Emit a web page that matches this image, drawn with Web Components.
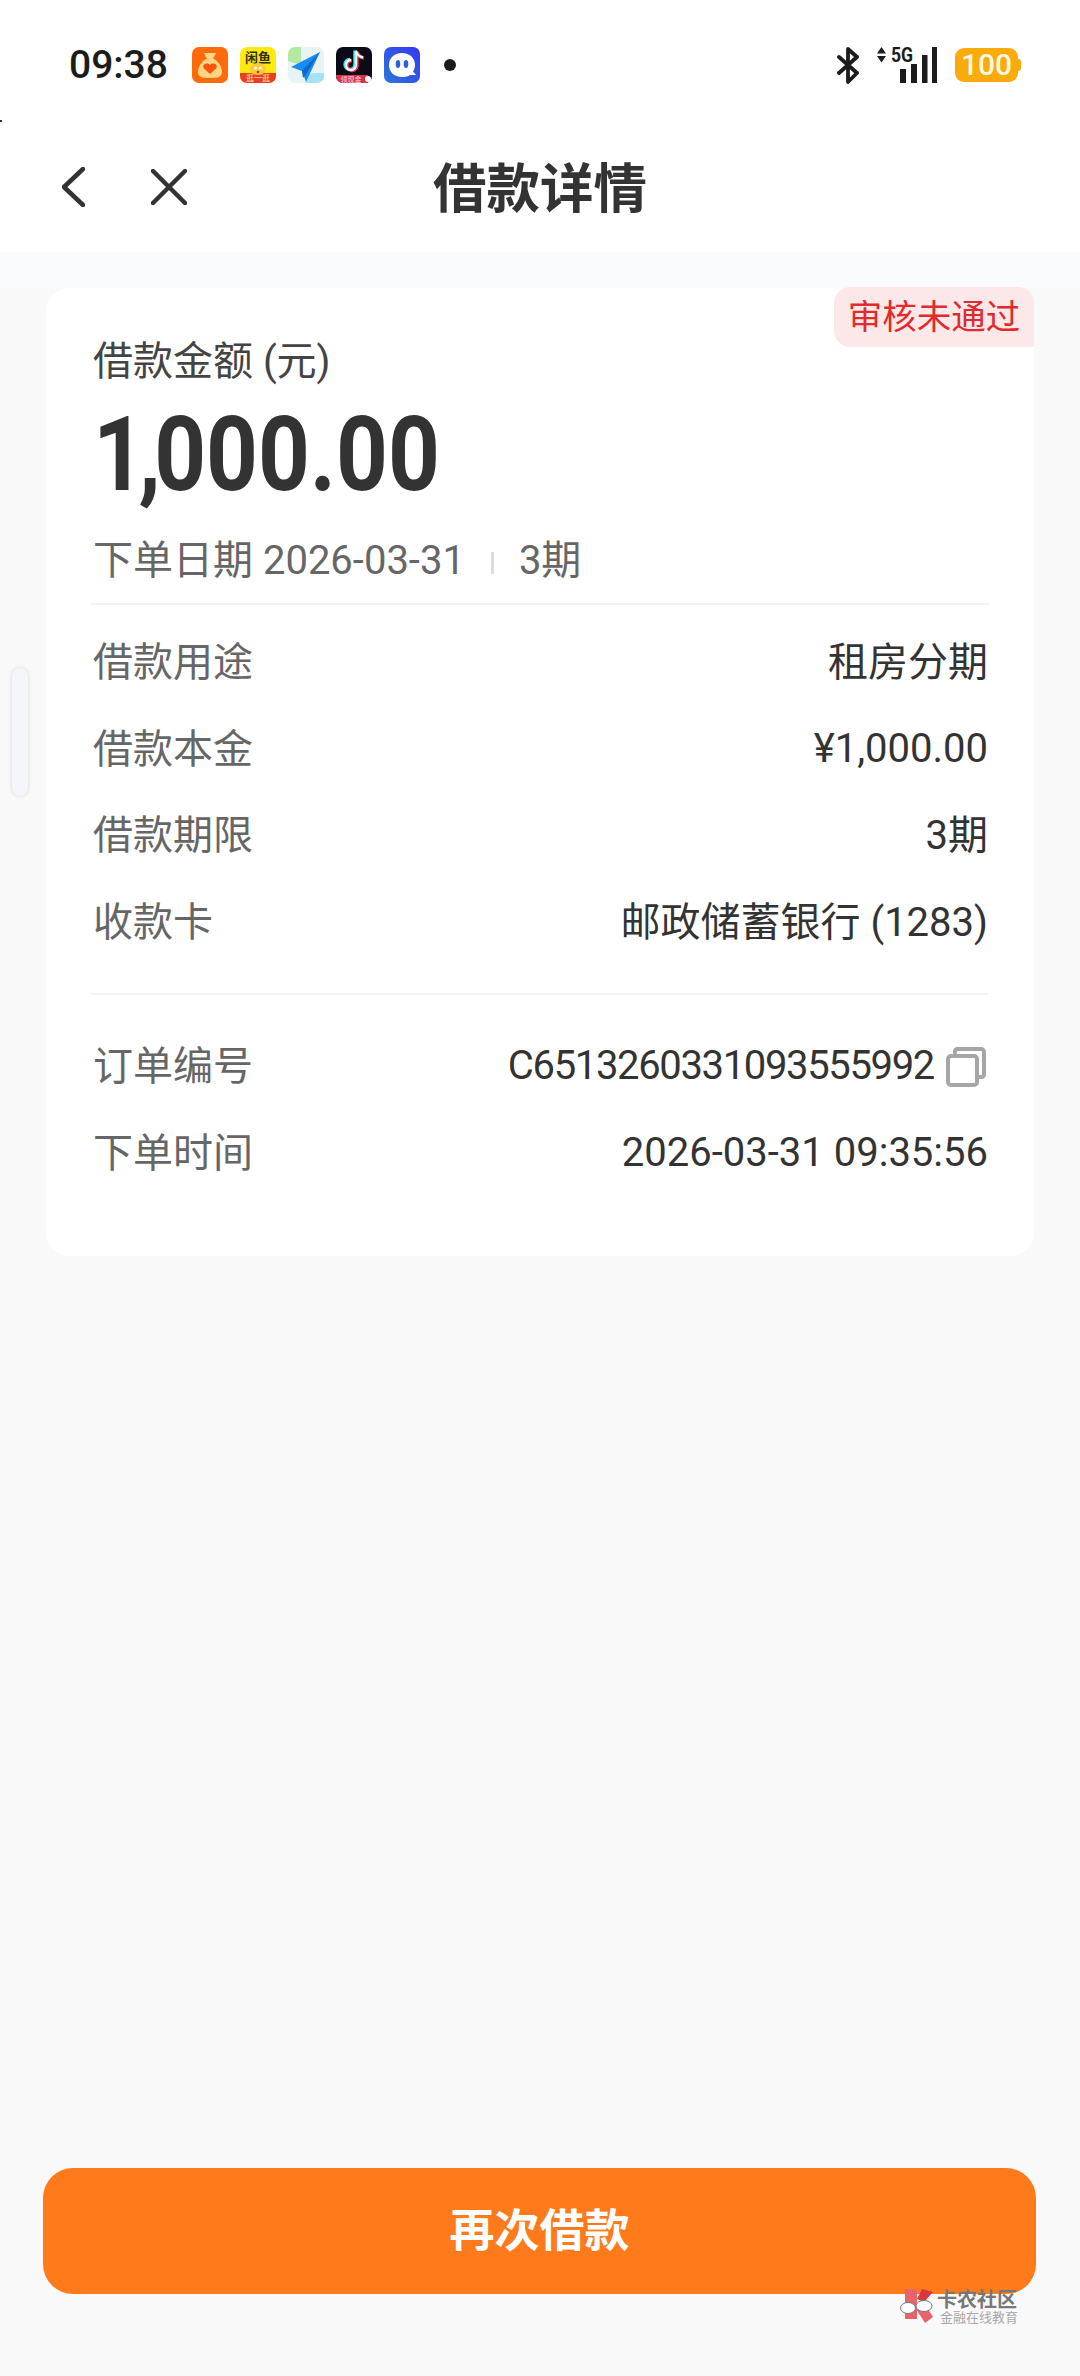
<!DOCTYPE html>
<html lang="zh-CN">
<head>
<meta charset="UTF-8">
<title>借款详情</title>
<style>
  html, body { margin: 0; padding: 0; }
  body { font-family: Roboto, "Noto Sans CJK SC", sans-serif; background: #f9f9f9; }
</style>
</head>
<body>
<loan-page>
  <status-bar slot="status"></status-bar>
  <nav-bar slot="nav" title="借款详情"></nav-bar>
  <loan-card slot="card" status="审核未通过">
    <detail-row label="借款用途" value="租房分期"></detail-row>
    <detail-row label="借款本金" value="¥1,000.00"></detail-row>
    <detail-row label="借款期限" value="3期"></detail-row>
    <detail-row label="收款卡" value="邮政储蓄银行 (1283)"></detail-row>
    <hr-line></hr-line>
    <detail-row label="订单编号" value="C6513260331093555992" copy></detail-row>
    <detail-row label="下单时间" value="2026-03-31 09:35:56"></detail-row>
  </loan-card>
  <action-button slot="action">再次借款</action-button>
</loan-page>

<script>
  const ROOT_FONT = 'Roboto, "Noto Sans CJK SC", sans-serif';

  // Page shell: white header, tinted band, card, pinned button
  class LoanPage extends HTMLElement {
    constructor() {
      super();
      this.attachShadow({ mode: 'open' });
      this.shadowRoot.innerHTML = `
        <style>
          :host { display: flex; flex-direction: column; position: relative; width: 1080px; height: 2376px; overflow: hidden; background: #f9f9f9; font-family: ${ROOT_FONT}; }
          .band { height: 36px; background: #f9fafc; flex: none; }
          .grow { flex: 1; }
          .tick { position: absolute; left: 0; top: 120px; width: 2px; height: 2px; background: #333; }
          .handle { position: absolute; left: 12px; top: 668px; width: 16px; height: 128px; box-sizing: border-box; border-radius: 8px; background: #f5f6fb; box-shadow: 0 0 3px 1px #e2e2e4; }
          .mark { position: absolute; left: 900px; top: 2289px; }
        </style>
        <slot name="status"></slot>
        <slot name="nav"></slot>
        <div class="band"></div>
        <slot name="card"></slot>
        <div class="grow"></div>
        <slot name="action"></slot>
        <div class="tick"></div>
        <div class="handle"></div>
        <water-mark class="mark"></water-mark>
      `;
    }
  }

  class StatusBar extends HTMLElement {
    constructor() {
      super();
      this.attachShadow({ mode: 'open' });
      this.shadowRoot.innerHTML = `
        <style>
          :host { display: flex; align-items: center; box-sizing: border-box; height: 122px; padding: 8px 0 0 69px; background: #fff; color: #1c1c1c; font-family: ${ROOT_FONT}; }
          .time { font-size: 39px; font-weight: 500; line-height: 40px; width: 123px; }
          .apps { display: flex; gap: 12px; }
          .apps svg { display: block; width: 36px; height: 36px; }
          .dot { width: 12px; height: 12px; border-radius: 50%; background: #1c1c1c; margin-left: 24px; }
          .right { display: flex; align-items: center; margin-left: auto; margin-right: 62px; }
          .right svg { display: block; }
          .battery { position: relative; box-sizing: border-box; width: 63px; height: 34px; margin-left: 18px; border-radius: 9px; background: #f8ab0b; color: #fff8e0; font-size: 30px; font-weight: 500; line-height: 34px; text-align: center; }
          .battery::after { content: ""; position: absolute; right: -3px; top: 11px; width: 3px; height: 12px; border-radius: 0 3px 3px 0; background: #f8ab0b; }
          .net { position: relative; width: 60px; height: 36px; margin-left: 18px; }
          .net span { position: absolute; left: 14px; top: -2px; font-size: 20px; font-weight: 700; line-height: 20px; transform: scaleX(.88); transform-origin: left; }
          .net svg { position: absolute; left: 0; top: 0; }
        </style>
        <div class="time">09:38</div>
        <div class="apps">
          <svg viewBox="0 0 36 36">
            <rect width="36" height="36" rx="7" fill="#ff6a0a"/>
            <path d="M12 6 L24 6 L21 12 L15 12 Z" fill="#ffd583"/>
            <path d="M14 12 H22 C28 16 30 21 30 25 C30 30 26 31 18 31 C10 31 6 30 6 25 C6 21 8 16 14 12 Z" fill="#ffd583"/>
            <path d="M18 27 L11.5 21 C10 17 15 15 18 18 C21 15 26 17 24.500 21 Z" fill="#f5560c"/>
          </svg>
          <svg viewBox="0 0 36 36">
            <rect width="36" height="36" rx="7" fill="#ffe90f"/>
            <path d="M0 26 H36 V29 A7 7 0 0 1 29 36 H7 A7 7 0 0 1 0 29 Z" fill="#e8401c"/>
            <text x="18" y="15" text-anchor="middle" font-size="13" font-weight="700" fill="#33301a">闲鱼</text>
            <ellipse cx="18" cy="22" rx="8" ry="6" fill="#ffc933"/>
            <circle cx="15.500" cy="21" r="1.600" fill="#fff"/><circle cx="20.500" cy="21" r="1.600" fill="#fff"/>
            <circle cx="18" cy="25" r="1.300" fill="#a33"/>
            <text x="18" y="34" text-anchor="middle" font-size="8" fill="#ffe4c4">逛一逛</text>
          </svg>
          <svg viewBox="0 0 36 36">
            <rect width="36" height="36" rx="7" fill="#e8f3f4"/>
            <path d="M0 7 A7 7 0 0 1 7 0 H13 V18 L0 14 Z" fill="#b5e8a0"/>
            <path d="M26 26 H36 V29 A7 7 0 0 1 29 36 H18 V28 Z" fill="#a5e2f7"/>
            <path d="M32 5 L3 20 L14 24 L18 35 Z" fill="#1a8cf0"/>
            <path d="M32 5 L14 24 L15 31 L18 27 Z" fill="#0d66cc"/>
          </svg>
          <svg viewBox="0 0 36 36">
            <rect width="36" height="36" rx="7" fill="#0b0b18"/>
            <path d="M0 28 H32 V36 H7 A7 7 0 0 1 0 29 Z" fill="#d9314a"/>
            <circle cx="32" cy="32" r="3" fill="#fff"/>
            <path d="M20 4 V18 A5 5 0 1 1 15 13 M20 4 C21 8 24 10 27 10.500" fill="none" stroke="#25f4ee" stroke-width="3.400" transform="translate(-1 -.6)"/>
            <path d="M20 4 V18 A5 5 0 1 1 15 13 M20 4 C21 8 24 10 27 10.500" fill="none" stroke="#fe2c55" stroke-width="3.400" transform="translate(1 .6)"/>
            <path d="M20 4 V18 A5 5 0 1 1 15 13 M20 4 C21 8 24 10 27 10.500" fill="none" stroke="#fff" stroke-width="2.400"/>
            <text x="15" y="35" text-anchor="middle" font-size="7" fill="#fbdde1">领现金</text>
          </svg>
          <svg viewBox="0 0 36 36">
            <defs><linearGradient id="qg" x1="0" y1="1" x2="1" y2="0"><stop offset="0" stop-color="#2a78d8"/><stop offset="1" stop-color="#3a35f5"/></linearGradient></defs>
            <rect width="36" height="36" rx="7" fill="url(#qg)"/>
            <path d="M18 6 C26 6 31 11 31 18 C31 21 30 23 29 24.500 L32 28 L26 28 C24 29.500 21 30 18 30 C10 30 5 25 5 18 C5 11 10 6 18 6 Z" fill="#fff"/>
            <ellipse cx="14" cy="17" rx="2.300" ry="4" fill="#2f5fd8"/>
            <ellipse cx="22" cy="17" rx="2.300" ry="4" fill="#2f5fd8"/>
          </svg>
        </div>
        <div class="dot"></div>
        <div class="right">
          <svg width="22" height="37" viewBox="0 0 22 37"><path d="M2 10 L20 26 L11 35 V2 L20 10 L2 26" fill="none" stroke="#1c1c1c" stroke-width="3.800" stroke-linejoin="round" stroke-linecap="round"/></svg>
          <div class="net">
            <span>5G</span>
            <svg width="60" height="36" viewBox="0 0 60 36" fill="#1c1c1c">
              <path d="M0 6.500 L4.500 0 L9 6.500 Z M0 9 L9 9 L4.500 15.500 Z"/>
              <rect x="23" y="22" width="6" height="14"/>
              <rect x="34" y="17" width="6" height="19"/>
              <rect x="45" y="8" width="5.500" height="28"/>
              <rect x="55" y="0" width="5.500" height="36"/>
            </svg>
          </div>
          <div class="battery">100</div>
        </div>
      `;
    }
  }

  class NavBar extends HTMLElement {
    constructor() {
      super();
      this.attachShadow({ mode: 'open' });
      const title = this.getAttribute('title') || '';
      this.removeAttribute('title');
      this.shadowRoot.innerHTML = `
        <style>
          :host { display: grid; grid-template-columns: 1fr auto 1fr; align-items: center; height: 130px; background: #fff; color: #333; }
          .left { display: flex; align-items: center; gap: 66px; padding-left: 62px; }
          svg { display: block; }
          h1 { margin: 0; padding-top: 6px; font-size: 53.500px; font-weight: 700; line-height: 60px; font-family: ${ROOT_FONT}; }
        </style>
        <div class="left">
          <svg width="23" height="40" viewBox="0 0 23 40"><path d="M21 2 L2 20 L21 38" fill="none" stroke="#333" stroke-width="4.500" stroke-linecap="round" stroke-linejoin="round"/></svg>
          <svg width="36" height="36" viewBox="0 0 36 36"><path d="M2 2 L34 34 M34 2 L2 34" fill="none" stroke="#333" stroke-width="4.500" stroke-linecap="round"/></svg>
        </div>
        <h1>${title}</h1>
        <div></div>
      `;
    }
  }

  class LoanCard extends HTMLElement {
    constructor() {
      super();
      this.attachShadow({ mode: 'open' });
      const status = this.getAttribute('status') || '';
      this.shadowRoot.innerHTML = `
        <style>
          :host { display: block; position: relative; box-sizing: border-box; height: 968px; margin: 0 46px; padding: 49px 46px 61px 47px; background: #fff; border-radius: 24px; font-family: ${ROOT_FONT}; }
          .tag { position: absolute; right: 0; top: -1px; box-sizing: border-box; width: 200px; height: 60px; border-radius: 16px 16px 0 16px; background: #fde8e9; color: #e02a2d; font-size: 34.500px; line-height: 60px; text-align: center; white-space: nowrap; }
          .label { font-size: 40px; line-height: 50px; color: #444; }
          .amount { margin-top: 13px; font-size: 104px; font-weight: 700; line-height: 110px; color: #333; white-space: nowrap; transform: scaleX(.87); transform-origin: left; }
          .comma { letter-spacing: -7.500px; }
          .meta { display: flex; align-items: center; margin-top: 26px; font-size: 40px; line-height: 50px; color: #666; white-space: nowrap; }
          .sep { width: 3px; height: 22px; margin: 4px 25px 0 26px; background: #ddd; }
          .rule { height: 2px; margin: 17px -1px 15px -2px; background: #f2f2f2; }
        </style>
        <div class="tag">${status}</div>
        <div class="label">借款金额 (元)</div>
        <div class="amount"><span class="comma">1,</span>000.00</div>
        <div class="meta"><span>下单日期 2026-03-31</span><span class="sep"></span><span>3期</span></div>
        <div class="rule"></div>
        <slot></slot>
      `;
    }
  }

  class DetailRow extends HTMLElement {
    constructor() {
      super();
      this.attachShadow({ mode: 'open' });
      const label = this.getAttribute('label') || '';
      const value = this.getAttribute('value') || '';
      const copy = this.hasAttribute('copy');
      // CJK lines sit a little lower than plain digit lines, nudge them up
      const cjk = /[\u4e00-\u9fff]/.test(value);
      this.shadowRoot.innerHTML = `
        <style>
          :host { display: flex; align-items: center; justify-content: space-between; height: 86.500px; font-size: 40px; white-space: nowrap; }
          .label { color: #666; padding-bottom: 8px; }
          .value { display: flex; align-items: center; color: #333; }
          .text { padding-bottom: 3px; }
          .text.cjk { padding-bottom: 8px; }
          .text.tight { letter-spacing: -1.350px; }
          svg { display: block; margin: 0 2px 0 12px; }
        </style>
        <span class="label">${label}</span>
        <span class="value"><span class="text ${cjk ? 'cjk' : ''} ${copy ? 'tight' : ''}">${value}</span>${copy ? `
          <svg width="40" height="40" viewBox="0 0 40 40" fill="none" stroke="#a6a6a6" stroke-width="4" stroke-linejoin="round">
            <rect x="2" y="9" width="29" height="29" rx="3"/>
            <path d="M9 9 V4 A2.500 2.500 0 0 1 11.500 2 H35 A3 3 0 0 1 38 5 V28 A2.500 2.500 0 0 1 35 30 H31"/>
          </svg>` : ''}</span>
      `;
    }
  }

  class HrLine extends HTMLElement {
    constructor() {
      super();
      this.attachShadow({ mode: 'open' });
      this.shadowRoot.innerHTML = `
        <style>:host { display: block; height: 2px; margin: 27px 0 29px -2px; background: #f2f2f2; }</style>
      `;
    }
  }

  class ActionButton extends HTMLElement {
    constructor() {
      super();
      this.attachShadow({ mode: 'open' });
      this.shadowRoot.innerHTML = `
        <style>
          :host { display: flex; align-items: center; justify-content: center; box-sizing: border-box; height: 126px; margin: 0 44px 82px 43px; padding-bottom: 8px; border-radius: 30px; background: #ff7a1a; color: #fff; font-size: 45px; font-weight: 700; font-family: ${ROOT_FONT}; }
        </style>
        <slot></slot>
      `;
    }
  }

  class WaterMark extends HTMLElement {
    constructor() {
      super();
      this.attachShadow({ mode: 'open' });
      this.shadowRoot.innerHTML = `
        <style>
          :host { display: flex; gap: 4px; font-family: ${ROOT_FONT}; }
          svg { display: block; }
          .text { display: flex; flex-direction: column; padding-top: 1px; }
          .big { font-size: 20px; font-weight: 700; line-height: 20px; color: #777; white-space: nowrap; }
          .small { font-size: 13px; line-height: 14px; margin: 1px 0 0 3px; color: #a8a8a8; white-space: nowrap; }
        </style>
        <svg width="33" height="34" viewBox="0 0 33 34">
          <path d="M5 0 H17 V30 H5 Z" fill="#e8646a"/>
          <path d="M17 10 L22 0 L33 3 L24 13 Z" fill="#d8383c"/>
          <path d="M16 20 L26 17 L33 28 L25 34 Z" fill="#e8646a"/>
          <ellipse cx="8" cy="19" rx="7.500" ry="5.500" fill="#fff" stroke="#777"/>
          <ellipse cx="24" cy="17" rx="8" ry="5.500" fill="#fff" stroke="#777"/>
        </svg>
        <div class="text">
          <span class="big">卡农社区</span>
          <span class="small">金融在线教育</span>
        </div>
      `;
    }
  }

  customElements.define('loan-page', LoanPage);
  customElements.define('status-bar', StatusBar);
  customElements.define('nav-bar', NavBar);
  customElements.define('loan-card', LoanCard);
  customElements.define('detail-row', DetailRow);
  customElements.define('hr-line', HrLine);
  customElements.define('action-button', ActionButton);
  customElements.define('water-mark', WaterMark);
</script>
</body>
</html>
